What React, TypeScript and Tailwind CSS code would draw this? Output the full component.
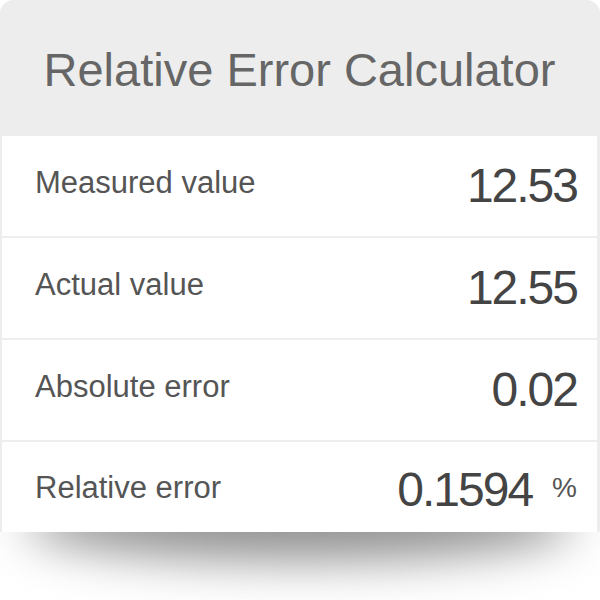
const rows = [
  { label: 'Measured value', value: '12.53' },
  { label: 'Actual value', value: '12.55' },
  { label: 'Absolute error', value: '0.02' },
];

export default function App() {
  return (
    <div
      className="w-[600px] h-[600px] bg-white overflow-hidden"
      style={{ fontFamily: '"Liberation Sans", Arial, sans-serif' }}
    >
      <div className="relative">
        {/* shadow under the card */}
        <div className="absolute left-[25px] right-[25px] top-[485px] h-[75px] bg-[#8f8f8f] blur-[24px] rounded-[50%]" />

        <div className="relative bg-[#ededed] rounded-t-[14px] px-[2px] pr-[3px]">
          <div className="h-[136px] flex items-center justify-center">
            <h1 className="text-[47px] text-[#666666] mt-[4px]">Relative Error Calculator</h1>
          </div>

          <div className="bg-white rounded-t-[4px] flex flex-col gap-[2px]">
            {rows.map((row) => (
              <div
                key={row.label}
                className="h-[100px] flex items-center justify-between pl-[33px] pr-[20px] bg-white shadow-[0_2px_0_#eeeeee]"
              >
                <span className="text-[31px] text-[#555555] mt-[-5px]">{row.label}</span>
                <span className="text-[48px] text-[#444444] tracking-[-2px]">{row.value}</span>
              </div>
            ))}
            <div className="h-[90px] flex items-center justify-between pl-[33px] pr-[20px] bg-white">
              <span className="text-[31px] text-[#555555] mt-[2px]">Relative error</span>
              <div className="flex items-center gap-[20px]">
                <span className="text-[48px] text-[#444444] tracking-[-2px] mt-[6px]">0.1594</span>
                <span className="text-[28px] text-[#555555] mt-[2px]">%</span>
              </div>
            </div>
          </div>
        </div>
      </div>
    </div>
  );
}
